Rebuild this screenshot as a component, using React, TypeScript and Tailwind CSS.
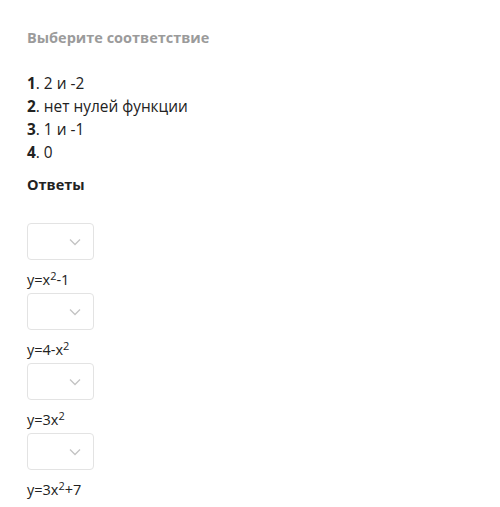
const sup = (t: string) => <sup className="text-[11px] -top-[0.45em]">{t}</sup>

const answers = [
  <>y=x{sup('2')}-1</>,
  <>y=4-x{sup('2')}</>,
  <>y=3x{sup('2')}</>,
  <>y=3x{sup('2')}+7</>,
]

const options = ['2 и -2', 'нет нулей функции', '1 и -1', '0']

function Chevron() {
  return (
    <svg width="12" height="8" viewBox="0 0 12 8" fill="none">
      <path d="M1 1.5l5 5 5-5" stroke="#c4c4c4" strokeWidth="1.3" />
    </svg>
  )
}

export default function App() {
  return (
    <div className="w-[500px] h-[507px] bg-white pl-[27px] pt-[28px] font-['Open_Sans',sans-serif] text-[#222] overflow-hidden">
      <h2 className="text-[14.5px] leading-5 font-bold text-[#9b9b9b]">Выберите соответствие</h2>

      <div className="mt-[24px] flex flex-col">
        {options.map((o, i) => (
          <div key={i} className="text-[15.4px] leading-[23px]">
            <span className="font-bold">{i + 1}</span>. {o}
          </div>
        ))}
      </div>

      <div className="mt-[11px] text-[14.5px] leading-5 font-bold">Ответы</div>

      <div className="mt-[28px] flex flex-col">
        {answers.map((a, i) => (
          <div key={i} className="flex flex-col">
            <div className="w-[67px] h-[37px] border border-[#e3e3e3] rounded-[4px] flex items-center justify-end pr-[12px]">
              <Chevron />
            </div>
            <div className="h-[33px] pt-[10px] text-[14.5px] leading-5">{a}</div>
          </div>
        ))}
      </div>
    </div>
  )
}
